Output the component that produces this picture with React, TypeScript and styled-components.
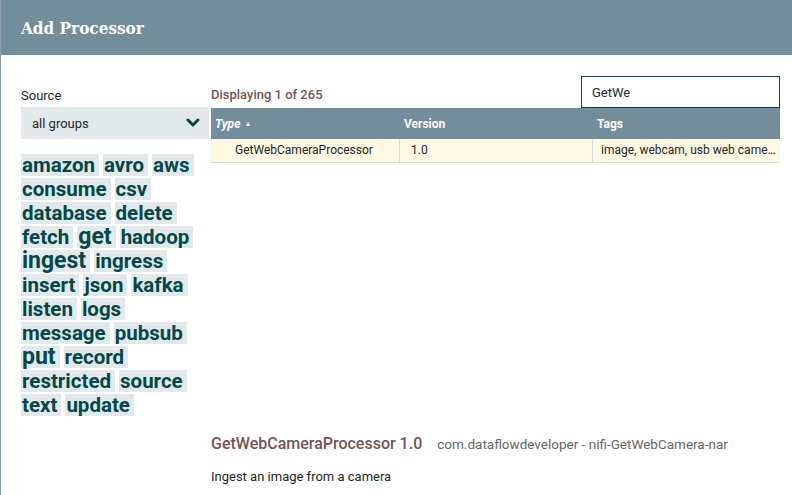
import React from 'react';
import styled, { createGlobalStyle } from 'styled-components';

const GlobalStyle = createGlobalStyle`
  html, body {
    margin: 0;
    padding: 0;
    background: #ffffff;
  }
  body {
    font-family: Roboto, 'Noto Sans', sans-serif;
    color: #262626;
  }
`;

type Tag = { label: string; big?: boolean };

const tags: Tag[] = [
  { label: 'amazon' },
  { label: 'avro' },
  { label: 'aws' },
  { label: 'consume' },
  { label: 'csv' },
  { label: 'database' },
  { label: 'delete' },
  { label: 'fetch' },
  { label: 'get', big: true },
  { label: 'hadoop' },
  { label: 'ingest', big: true },
  { label: 'ingress' },
  { label: 'insert' },
  { label: 'json' },
  { label: 'kafka' },
  { label: 'listen' },
  { label: 'logs' },
  { label: 'message' },
  { label: 'pubsub' },
  { label: 'put', big: true },
  { label: 'record' },
  { label: 'restricted' },
  { label: 'source' },
  { label: 'text' },
  { label: 'update' },
];

const Chevron = () => (
  <svg width="14" height="10" viewBox="0 0 14 10">
    <polyline points="2,2 7,7 12,2" fill="none" stroke="#004849" strokeWidth="3" strokeLinecap="round" strokeLinejoin="round" />
  </svg>
);

const App = () => (
  <>
    <GlobalStyle />
    <Dialog>
      <Header>
        <Title>Add Processor</Title>
      </Header>
      <Body>
        <Sidebar>
          <Label>Source</Label>
          <Select>
            <span>all groups</span>
            <Chevron />
          </Select>
          <TagCloud>
            {tags.map((t) => (
              <TagItem key={t.label} $big={t.big}>
                {t.label}
              </TagItem>
            ))}
          </TagCloud>
        </Sidebar>
        <Main>
          <TopRow>
            <Count>Displaying 1 of 265</Count>
            <Search defaultValue="GetWe" />
          </TopRow>
          <Grid>
            <HeadCell>
              <i>Type</i> <SortArrow>▲</SortArrow>
            </HeadCell>
            <HeadCell>Version</HeadCell>
            <HeadCell>Tags</HeadCell>
            <Cell $pad={24}>GetWebCameraProcessor</Cell>
            <Cell $pad={11}>1.0</Cell>
            <Cell $pad={8} $last>
              image, webcam, usb web came…
            </Cell>
          </Grid>
          <Details>
            <DetailHead>
              <DetailName>GetWebCameraProcessor 1.0</DetailName>
              <Bundle>com.dataflowdeveloper - nifi-GetWebCamera-nar</Bundle>
            </DetailHead>
            <Description>Ingest an image from a camera</Description>
          </Details>
        </Main>
      </Body>
    </Dialog>
  </>
);

export default App;

const Dialog = styled.div`
  width: 792px;
  height: 495px;
  box-sizing: border-box;
  border-left: 1px solid #8e9ea6;
  display: flex;
  flex-direction: column;
  overflow: hidden;
`;

const Header = styled.div`
  height: 55px;
  flex: none;
  background: #728e9b;
  display: flex;
  align-items: center;
  padding-left: 20px;
`;

const Title = styled.h1`
  margin: 0;
  font-family: 'DejaVu Serif Condensed', 'DejaVu Serif', serif;
  font-weight: bold;
  font-size: 17px;
  color: #ffffff;
  padding-top: 1px;
`;

const Body = styled.div`
  flex: 1;
  display: flex;
  padding: 0 12px 0 20px;
  min-height: 0;
`;

const Sidebar = styled.div`
  width: 190px;
  flex: none;
  padding-top: 33px;
`;

const Label = styled.div`
  font-size: 13px;
  line-height: 16px;
  color: #262626;
`;

const Select = styled.div`
  margin-top: 3px;
  width: 188px;
  height: 32px;
  box-sizing: border-box;
  background: #e3e8eb;
  display: flex;
  align-items: center;
  justify-content: space-between;
  padding: 0 9px 0 11px;
  font-size: 13px;
  color: #262626;
`;

const TagCloud = styled.div`
  margin-top: 15px;
  display: flex;
  flex-wrap: wrap;
  gap: 2px 4px;
  width: 190px;
`;

const TagItem = styled.span<{ $big?: boolean }>`
  height: 22px;
  line-height: 22px;
  background: #e3e8eb;
  color: #004849;
  font-weight: bold;
  font-size: ${(p) => (p.$big ? '23px' : '20.5px')};
  padding: 0 4px 0 1px;
  white-space: nowrap;
`;

const Main = styled.div`
  flex: 1;
  display: flex;
  flex-direction: column;
  min-width: 0;
`;

const TopRow = styled.div`
  margin-top: 21px;
  display: flex;
  justify-content: space-between;
  align-items: flex-end;
`;

const Count = styled.div`
  font-size: 13px;
  font-weight: 500;
  color: #775351;
  padding-bottom: 6px;
`;

const Search = styled.input`
  width: 199px;
  height: 32px;
  box-sizing: border-box;
  border: 1px solid #004849;
  padding: 0 10px;
  font-family: Roboto, sans-serif;
  font-size: 13px;
  color: #262626;
  outline: none;
`;

const Grid = styled.div`
  display: grid;
  grid-template-columns: 189px 193px 1fr;
  grid-template-rows: 31px 24px;
`;

const HeadCell = styled.div`
  background: #728e9b;
  color: #ffffff;
  font-size: 12px;
  font-weight: bold;
  display: flex;
  align-items: center;
  padding-left: 4px;
  i {
    font-weight: bold;
  }
`;

const SortArrow = styled.span`
  font-size: 7px;
  margin-left: 4px;
`;

const Cell = styled.div<{ $pad: number; $last?: boolean }>`
  background: #fff8e3;
  border-bottom: 1px solid #d4dde1;
  border-right: ${(p) => (p.$last ? 'none' : '1px solid #d4dde1')};
  padding-left: ${(p) => p.$pad}px;
  font-size: 12px;
  line-height: 23px;
  color: #262626;
  white-space: nowrap;
  min-width: 0;
`;

const Details = styled.div`
  margin-top: auto;
  padding-bottom: 10px;
`;

const DetailHead = styled.div`
  display: flex;
  align-items: baseline;
  gap: 15px;
  line-height: 20px;
`;

const DetailName = styled.span`
  font-size: 16px;
  font-weight: 500;
  color: #775351;
`;

const Bundle = styled.span`
  font-size: 13.5px;
  color: #666666;
`;

const Description = styled.div`
  margin-top: 15px;
  font-size: 13px;
  line-height: 16px;
  color: #262626;
`;
